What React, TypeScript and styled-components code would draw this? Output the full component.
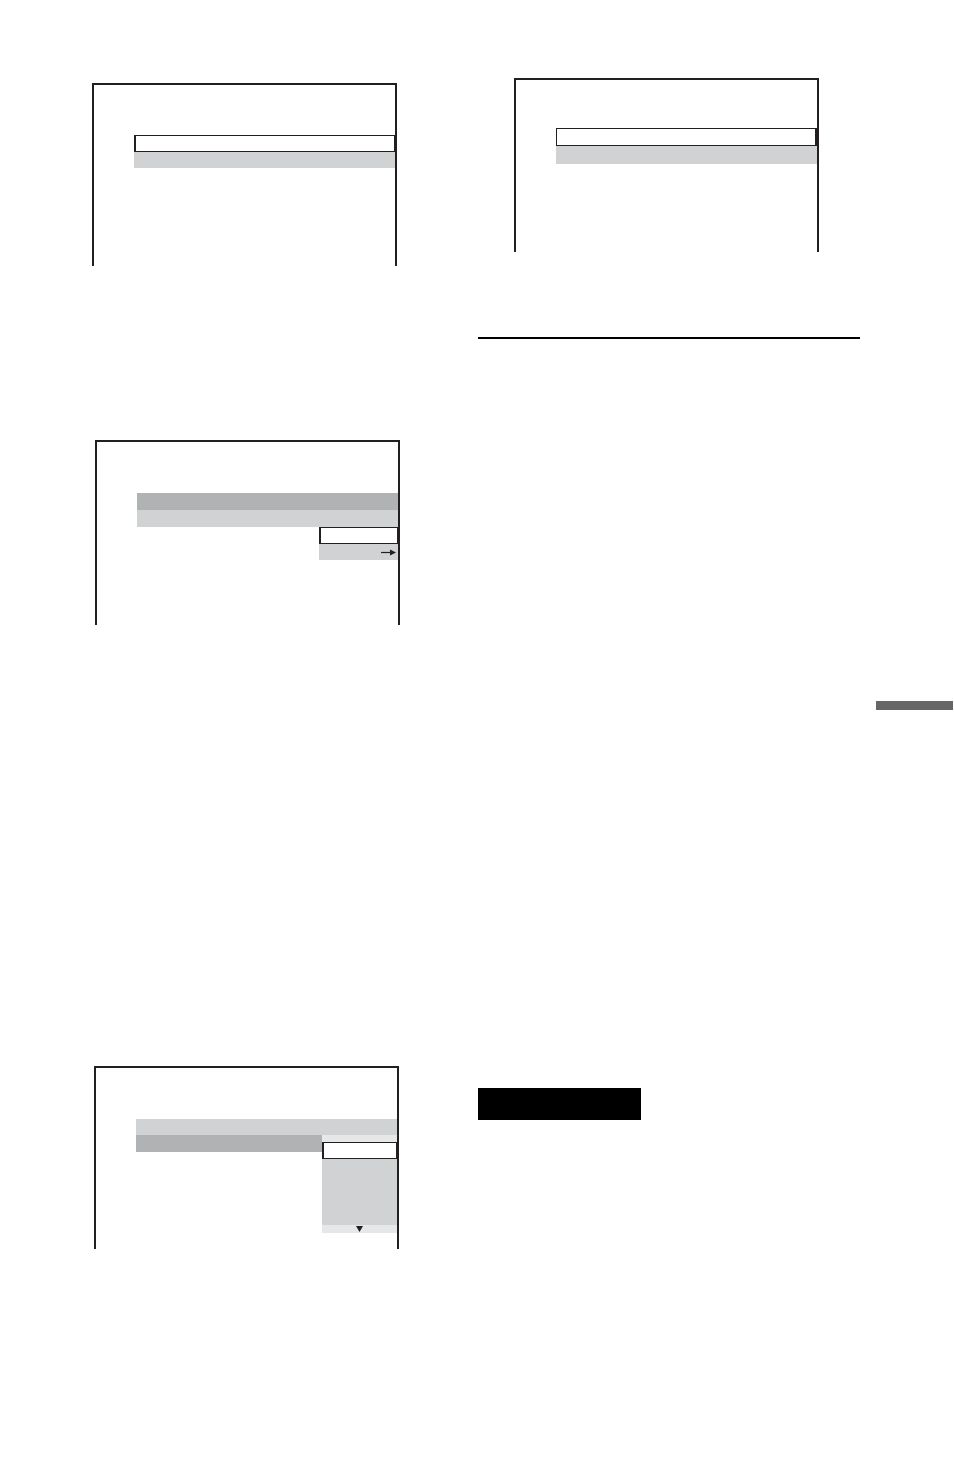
import styled, { createGlobalStyle } from "styled-components";

const GlobalStyle = createGlobalStyle`
  html, body {
    margin: 0;
    padding: 0;
    background: #ffffff;
    font-family: "Liberation Sans", Arial, sans-serif;
  }
`;

const INK = "#231f20";
const GRAY = "#d1d2d4";
const DARK = "#b1b2b4";
const PALE = "#e6e7e8";

const Page = styled.div`
  width: 954px;
  height: 1482px;
  display: grid;
  grid-template-columns: 478px 398px 78px;
  overflow: hidden;
`;

const Column = styled.div<{ $pad?: number }>`
  display: flex;
  flex-direction: column;
  align-items: flex-start;
  padding-left: ${(p) => p.$pad ?? 0}px;
`;

const Screen = styled.div<{ $top: number; $left?: number; $h: number; $padTop: number }>`
  box-sizing: border-box;
  width: 305px;
  height: ${(p) => p.$h}px;
  margin-top: ${(p) => p.$top}px;
  margin-left: ${(p) => p.$left ?? 0}px;
  border: 2px solid ${INK};
  border-bottom: 0;
  padding: ${(p) => p.$padTop}px 0 0 40px;
  display: flex;
  flex-direction: column;
`;

const Row = styled.div<{ $tone: "gray" | "dark" | "pale" | "white"; $h?: number }>`
  height: ${(p) => p.$h ?? 17}px;
  background: ${(p) =>
    p.$tone === "gray" ? GRAY : p.$tone === "dark" ? DARK : p.$tone === "pale" ? PALE : "#fff"};
`;

const Selected = styled.div<{ $thick: "left" | "right"; $h?: number }>`
  box-sizing: border-box;
  height: ${(p) => p.$h ?? 17}px;
  background: #fff;
  border: 1px solid ${INK};
  border-${(p) => p.$thick}-width: 2px;
`;

const SubMenu = styled.div<{ $w: number }>`
  align-self: flex-end;
  width: ${(p) => p.$w}px;
  display: flex;
  flex-direction: column;
`;

const SplitRow = styled.div`
  display: flex;
  align-items: flex-start;
`;

const Fill = styled.div`
  flex: 1;
  height: 17px;
  background: ${DARK};
`;

const IconRow = styled.div<{ $tone: "gray" | "pale"; $h: number; $align: "center" | "flex-end" }>`
  height: ${(p) => p.$h}px;
  background: ${(p) => (p.$tone === "gray" ? GRAY : PALE)};
  display: flex;
  align-items: center;
  justify-content: ${(p) => p.$align};
  padding-right: ${(p) => (p.$align === "flex-end" ? 2 : 0)}px;
`;

const Rule = styled.div`
  margin-top: 85px;
  width: 382px;
  height: 1.5px;
  background: #000;
`;

const Heading = styled.div`
  margin-top: 749px;
  width: 163px;
  height: 32px;
  background: #000;
`;

const Tab = styled.div`
  margin-top: 701px;
  width: 77px;
  height: 9px;
  background: #666666;
`;

function ArrowRight() {
  return (
    <svg width="15" height="7" viewBox="0 0 15 7">
      <line x1="0" y1="3.5" x2="10" y2="3.5" stroke={INK} strokeWidth="1.2" />
      <polygon points="9,0.5 15,3.5 9,6.5" fill={INK} />
    </svg>
  );
}

function ArrowDown() {
  return (
    <svg width="7" height="6" viewBox="0 0 7 6">
      <polygon points="0,0 7,0 3.5,6" fill={INK} />
    </svg>
  );
}

export default function App() {
  return (
    <>
      <GlobalStyle />
      <Page>
        <Column $pad={92}>
          <Screen $top={83} $h={183} $padTop={50}>
            <Selected $thick="left" />
            <Row $tone="gray" $h={16} />
          </Screen>

          <Screen $top={174} $left={3} $h={185} $padTop={51}>
            <Row $tone="dark" />
            <Row $tone="gray" />
            <SubMenu $w={79}>
              <Selected $thick="left" $h={17} />
              <IconRow $tone="gray" $h={16} $align="flex-end">
                <ArrowRight />
              </IconRow>
            </SubMenu>
          </Screen>

          <Screen $top={441} $left={2} $h={183} $padTop={51}>
            <Row $tone="gray" $h={16} />
            <SplitRow>
              <Fill />
              <SubMenu $w={75}>
                <Row $tone="pale" $h={7} />
                <Selected $thick="left" $h={17} />
                <Row $tone="gray" $h={66} />
                <IconRow $tone="pale" $h={8} $align="center">
                  <ArrowDown />
                </IconRow>
              </SubMenu>
            </SplitRow>
          </Screen>
        </Column>

        <Column>
          <Screen $top={78} $left={36} $h={174} $padTop={48}>
            <Selected $thick="right" $h={18} />
            <Row $tone="gray" $h={18} />
          </Screen>
          <Rule />
          <Heading />
        </Column>

        <Column>
          <Tab />
        </Column>
      </Page>
    </>
  );
}
